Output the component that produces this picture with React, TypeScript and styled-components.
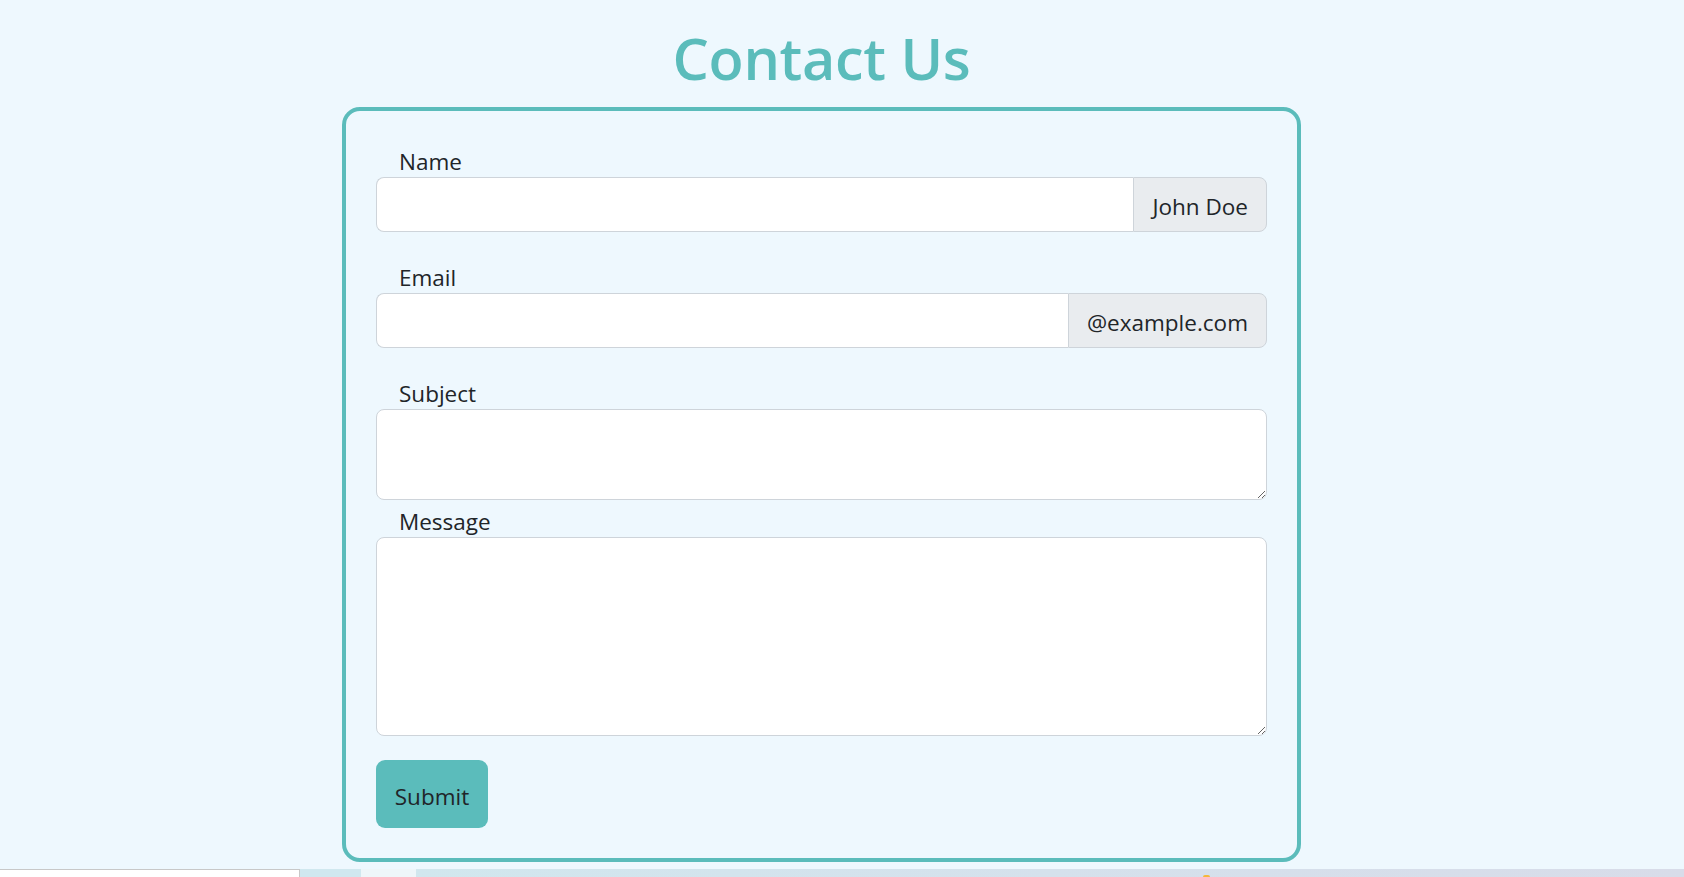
import React from "react";
import styled, { createGlobalStyle } from "styled-components";

const GlobalStyle = createGlobalStyle`
  html, body {
    margin: 0;
    padding: 0;
    background: #eef8fe;
    overflow: hidden;
  }
  body {
    font-family: "Open Sans", "Noto Sans", sans-serif;
    color: #212529;
  }
  * { box-sizing: border-box; }
`;

const TEAL = "#5bbcbb";

const Page = styled.div`
  width: 1684px;
  height: 877px;
  display: flex;
  flex-direction: column;
  background: #eef8fe;
`;

const Main = styled.main`
  display: flex;
  flex-direction: column;
  align-items: center;
  padding-right: 41px;
`;

const Title = styled.h1`
  margin: 23px 0 14px;
  height: 70px;
  line-height: 70px;
  font-size: 57.5px;
  font-weight: 600;
  color: ${TEAL};
  letter-spacing: -0.3px;
`;

const Card = styled.form`
  width: 959px;
  border: 4px solid ${TEAL};
  border-radius: 18px;
  padding: 32px 30px 30px;
  display: flex;
  flex-direction: column;
  align-items: stretch;
`;

const Group = styled.div<{ $gap: number }>`
  display: flex;
  flex-direction: column;
  margin-bottom: ${(p) => p.$gap}px;
`;

const Label = styled.label`
  display: block;
  height: 34px;
  line-height: 34px;
  font-size: 22.5px;
  padding: 2px 0 0 23px;
  color: #212529;
`;

const InputGroup = styled.div`
  display: flex;
  height: 55px;
`;

const TextInput = styled.input`
  flex: 1;
  min-width: 0;
  height: 55px;
  border: 1px solid #ced4da;
  border-right: none;
  border-radius: 8px 0 0 8px;
  background: #fff;
  font: inherit;
  font-size: 22.5px;
  padding: 0 18px;
  outline: none;
`;

const Addon = styled.span`
  display: flex;
  align-items: center;
  padding: 4px 18px 0;
  background: #e9ecef;
  border: 1px solid #ced4da;
  border-radius: 0 8px 8px 0;
  font-size: 22.5px;
  color: #212529;
  white-space: nowrap;
`;

const TextArea = styled.textarea<{ $h: number }>`
  display: block;
  width: 100%;
  height: ${(p) => p.$h}px;
  border: 1px solid #ced4da;
  border-radius: 8px;
  background: #fff;
  font: inherit;
  font-size: 22.5px;
  padding: 9px 18px;
  outline: none;
  resize: vertical;
`;

const SubmitButton = styled.button`
  align-self: flex-start;
  width: 112px;
  height: 68px;
  border: none;
  border-radius: 9px;
  background: ${TEAL};
  color: #212529;
  font: inherit;
  font-size: 22.5px;
  padding: 5px 0 0;
  cursor: pointer;
`;

const Strip = styled.div`
  margin-top: 7px;
  height: 8px;
  display: flex;
`;

const StripSegment = styled.div<{ $w?: number; $bg: string; $edge?: boolean }>`
  ${(p) => (p.$w ? `width: ${p.$w}px;` : "flex: 1;")}
  background: ${(p) => p.$bg};
  ${(p) => (p.$edge ? "border-top: 1px solid #c8c8c8; border-right: 1px solid #c8c8c8;" : "")}
`;

const StripTail = styled.div`
  flex: 1;
  display: flex;
  align-items: flex-end;
  padding-left: 787px;
  background: linear-gradient(90deg, #d1e7ee 0%, #d5e1ec 50%, #d8dce9 100%);
`;

const Dot = styled.span`
  width: 7px;
  height: 2px;
  border-radius: 3px 3px 0 0;
  background: #f4b73a;
`;

export default function App() {
  return (
    <Page>
      <GlobalStyle />
      <Main>
        <Title>Contact Us</Title>
        <Card onSubmit={(e) => e.preventDefault()}>
          <Group $gap={27}>
            <Label htmlFor="name">Name</Label>
            <InputGroup>
              <TextInput id="name" type="text" />
              <Addon>John Doe</Addon>
            </InputGroup>
          </Group>
          <Group $gap={27}>
            <Label htmlFor="email">Email</Label>
            <InputGroup>
              <TextInput id="email" type="text" />
              <Addon>@example.com</Addon>
            </InputGroup>
          </Group>
          <Group $gap={3}>
            <Label htmlFor="subject">Subject</Label>
            <TextArea id="subject" $h={91} />
          </Group>
          <Group $gap={24}>
            <Label htmlFor="message">Message</Label>
            <TextArea id="message" $h={199} />
          </Group>
          <SubmitButton type="submit">Submit</SubmitButton>
        </Card>
      </Main>
      <Strip>
        <StripSegment $w={300} $bg="#ffffff" $edge />
        <StripSegment $w={61} $bg="#d0e8ef" />
        <StripSegment $w={55} $bg="#eef6f9" />
        <StripTail>
          <Dot />
        </StripTail>
      </Strip>
    </Page>
  );
}
